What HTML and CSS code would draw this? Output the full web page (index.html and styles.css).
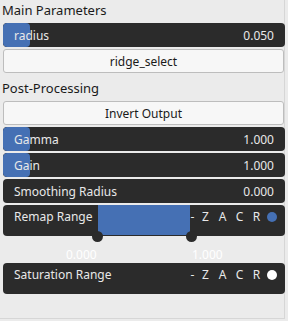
FILE: index.html
```html
<!DOCTYPE html>
<html>
<head>
<meta charset="utf-8">
<link rel="stylesheet" href="styles.css">
</head>
<body>
<div class="panel">
  <div class="header">Main Parameters</div>
  <div class="slider">
    <div class="fill"></div>
    <span class="label">radius</span>
    <span class="value">0.050</span>
  </div>
  <div class="button">ridge_select</div>
  <div class="header second">Post-Processing</div>
  <div class="button">Invert Output</div>
  <div class="slider">
    <div class="fill"></div>
    <span class="label">Gamma</span>
    <span class="value">1.000</span>
  </div>
  <div class="slider">
    <div class="fill"></div>
    <span class="label">Gain</span>
    <span class="value">1.000</span>
  </div>
  <div class="slider">
    <span class="label">Smoothing Radius</span>
    <span class="value">0.000</span>
  </div>
  <div class="range">
    <div class="range-row">
      <span class="label">Remap Range</span>
      <div class="range-fill"></div>
      <span class="flags"><span class="f dash">-</span><span class="f">Z</span><span class="f">A</span><span class="f">C</span><span class="f">R</span></span>
      <span class="dot blue"></span>
      <span class="handle h1"></span>
      <span class="handle h2"></span>
    </div>
    <div class="range-labels">
      <span class="rl rl1">0.000</span>
      <span class="rl rl2">1.000</span>
    </div>
  </div>
  <div class="range-row sat">
    <span class="label">Saturation Range</span>
    <span class="flags"><span class="f dash">-</span><span class="f">Z</span><span class="f">A</span><span class="f">C</span><span class="f">R</span></span>
    <span class="dot white"></span>
  </div>
</div>
</body>
</html>
```
FILE: styles.css
```css
html, body {
  margin: 0;
  padding: 0;
  background: #ebebeb;
}
body {
  font-family: "Noto Sans", "Open Sans", sans-serif;
  font-size: 12px;
  color: #1a1a1a;
}
.panel {
  width: 285px;
  height: 319px;
  box-sizing: border-box;
  border-right: 1px solid #d6d6d6;
  border-bottom: 1px solid #d6d6d6;
  display: flex;
  flex-direction: column;
  gap: 2px;
  padding: 0 0 0 3px;
}
.header {
  height: 21px;
  line-height: 20px;
  margin-left: -1px;
  font-size: 13px;
}
.header.second {
  height: 24px;
  line-height: 26px;
}
.slider {
  position: relative;
  width: 282px;
  height: 24px;
  background: #2b2b2b;
  border-radius: 4px;
  color: #e8e8e8;
  display: flex;
  align-items: center;
  justify-content: space-between;
  padding: 0 11px 0 11px;
  box-sizing: border-box;
  overflow: hidden;
}
.fill {
  position: absolute;
  left: 0;
  top: 0;
  bottom: 0;
  width: 27px;
  background: #4570b4;
  border-radius: 4px;
}
.label, .value { position: relative; }
.button {
  width: 281px;
  height: 24px;
  box-sizing: border-box;
  border: 1px solid #bdbdbd;
  border-radius: 3px;
  background: #f7f7f7;
  display: flex;
  align-items: center;
  justify-content: center;
}
.range { display: flex; flex-direction: column; }
.range-row {
  position: relative;
  width: 282px;
  height: 31px;
  background: #2b2b2b;
  border-radius: 4px;
  color: #e8e8e8;
  display: flex;
  align-items: center;
  padding: 0 8px 0 11px;
  box-sizing: border-box;
}
.range-row .label { flex: 1; margin-top: -8px; }
.range-fill {
  position: absolute;
  left: 95px;
  top: 0;
  width: 92px;
  height: 30px;
  background: #4570b4;
}
.flags {
  position: relative;
  margin-top: -8px;
  display: flex;
}
.f {
  width: 17px;
  text-align: center;
}
.f.dash { width: 9px; }
.dot {
  width: 10px;
  height: 10px;
  border-radius: 50%;
  margin-left: 2px;
  margin-top: -8px;
}
.dot.blue { background: #4570b4; }
.dot.white { background: #ffffff; }
.handle {
  position: absolute;
  top: 26px;
  width: 11px;
  height: 11px;
  border-radius: 50%;
  background: #2b2b2b;
}
.h1 { left: 89px; }
.h2 { left: 183px; }
.range-labels {
  position: relative;
  height: 24px;
}
.rl {
  position: absolute;
  top: 10px;
  color: #ffffff;
}
.rl1 { left: 63px; }
.rl2 { left: 189px; }
.sat { margin-top: 1px; }
```
